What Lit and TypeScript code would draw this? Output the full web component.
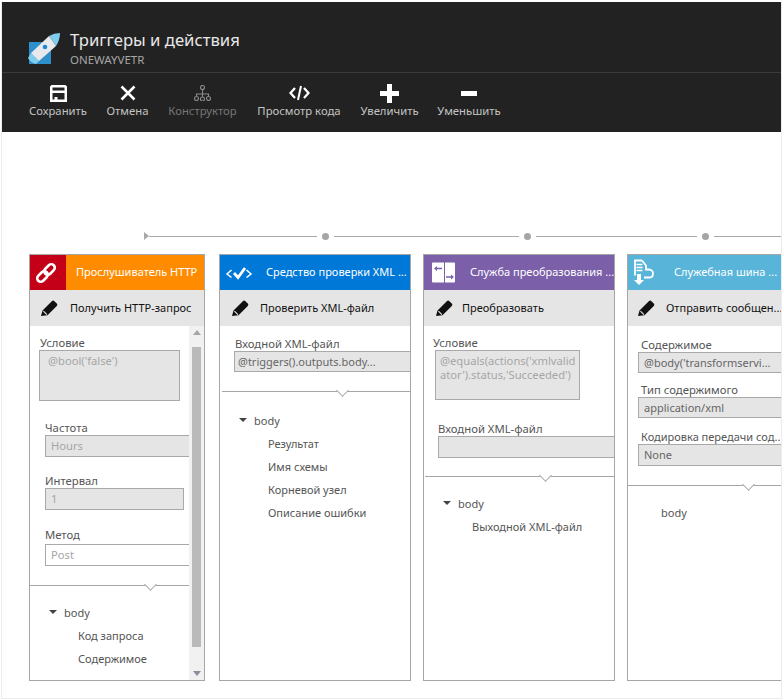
import { LitElement, html, css, svg } from 'lit';
import { customElement } from 'lit/decorators.js';

interface Field { mt: number; x: number; label: string; labelX: number; value: string; h: number; w: number; pad: number; gap?: number; light?: boolean; faded?: boolean; small?: boolean; }
interface Card {
    title: string; action: string; color: string; iconBg?: string; icon: unknown; width: number; actionX: number; actionGap: number;
    fields: Field[]; dividerMt: number; dividerX: number; notch: number; treeMt: number; treeX: number;
    arrow: boolean; children: string[]; scroll?: boolean;
}

const saveIcon = svg`<path fill="#fff" fill-rule="evenodd" d="M1.500 0h14l1.500 1.500V17H0V1.500zM2.500 2.500v3h12v-3zM2.500 8v6.500h2v-2.500h3v2.500h7V8z"/>`;
const cancelIcon = svg`<path stroke="#fff" stroke-width="2.600" d="M1.500 1.500l13 13M14.500 1.500l-13 13"/>`;
const treeIcon = svg`<g fill="none" stroke="#8a8a8a" stroke-width="1.100"><circle cx="8.500" cy="2.500" r="2"/><circle cx="2.500" cy="13.500" r="2"/><circle cx="8.500" cy="14" r="2"/><circle cx="14.500" cy="13.500" r="2"/><path d="M8.500 4.500V12M2.500 11.500V9h12v2.500"/></g>`;
const codeIcon = svg`<path fill="none" stroke="#fff" stroke-width="2.300" d="M6 3L1.500 8 6 13M15 3l4.500 5L15 13"/><path stroke="#fff" stroke-width="2" d="M12 1L9 15"/>`;
const plusIcon = svg`<path fill="#fff" d="M7 0h5v7h7v5h-7v7H7v-7H0V7h7z"/>`;
const minusIcon = svg`<path fill="#fff" d="M0 0h16v5H0z"/>`;
const pencilIcon = svg`<path fill="#111" d="M0 16l1.500-5.500L10.800 1.200q1.300-1.200 2.600 0l2.400 2.300q1.200 1.300 0 2.600L6.500 15.200zM2 11.500l3.500 3.500.8-.8-3.500-3.500z"/>`;
const linkIcon = svg`<g fill="none" stroke="#fff" stroke-width="2.600" transform="rotate(-45 11 11)"><rect x="0" y="7.500" width="12" height="7" rx="3.500"/><rect x="10" y="7.500" width="12" height="7" rx="3.500"/></g>`;
const checkIcon = svg`<g fill="none" stroke="#fff" stroke-width="1.500"><path d="M6.500 8L2 12l4.500 3.500M21.500 8L26 12l-4.500 3.500"/><path stroke-width="2.800" d="M9 11l4 4.500L20 6"/></g>`;
const transformIcon = svg`<path fill="#fff" d="M4 .500h11v20H4q-1 0-1-1V1.500q0-1 1-1zM16 .500h9q1 0 1 1v18q0 1-1 1h-9z"/><path stroke="#7b5fa9" stroke-width="1.600" d="M8 6.500h5M17 15h5" fill="none"/><path fill="#7b5fa9" d="M8 4v5l-3-2.500zM22 12.500v5l3-2.500z"/>`;
const busIcon = svg`<path fill="none" stroke="#fff" stroke-width="1.800" d="M9-1.500H2v15M9-1.500l4 5v4h3c2.500 0 4 2 4 4 0 2.500-1.500 4-3.500 4H11"/><path stroke="#fff" stroke-width="1.300" d="M3.500 2.500h6M3.500 5.500h6M3.500 8.500h6"/><path fill="#fff" d="M4 12h4v6h3l-5 5-5-5h3z"/>`;

const cards: Card[] = [
    {
        title: 'Прослушиватель HTTP', action: 'Получить HTTP-запрос', color: '#ff8c00', iconBg: '#c30017', icon: linkIcon, width: 176, actionX: 11, actionGap: 12,
        fields: [
            { mt: 10, x: 9, labelX: 10, label: 'Условие', value: "@bool('false')", h: 51, w: 141, pad: 8, faded: true },
            { mt: 20, x: 15, labelX: 15, label: 'Частота', value: 'Hours', h: 22, w: 170, pad: 5, faded: true },
            { mt: 17, x: 15, labelX: 15, label: 'Интервал', value: '1', h: 22, w: 139, pad: 5, faded: true },
            { mt: 18, gap: 2, x: 15, labelX: 15, label: 'Метод', value: 'Post', h: 22, w: 170, pad: 5, light: true, faded: true },
        ],
        dividerMt: 19, dividerX: 0, notch: 120, treeMt: 18, treeX: 19, arrow: true, children: ['Код запроса', 'Содержимое'], scroll: true,
    },
    {
        title: 'Средство проверки XML ...', action: 'Проверить XML-файл', color: '#0078d7', icon: checkIcon, width: 192, actionX: 12, actionGap: 11,
        fields: [{ mt: 11, x: 14, labelX: 15, label: 'Входной XML-файл', value: '@triggers().outputs.body...', h: 21, w: 190, pad: 3 }],
        dividerMt: 19, dividerX: 2, notch: 122, treeMt: 20, treeX: 19, arrow: true,
        children: ['Результат', 'Имя схемы', 'Корневой узел', 'Описание ошибки'],
    },
    {
        title: 'Служба преобразования ...', action: 'Преобразовать', color: '#7b5fa9', icon: transformIcon, width: 192, actionX: 12, actionGap: 9,
        fields: [
            { mt: 10, x: 11, labelX: 9, label: 'Условие', value: "@equals(actions('xmlvalidator').status,'Succeeded')", h: 50, w: 145, pad: 4, faded: true },
            { mt: 22, x: 14, labelX: 14, label: 'Входной XML-файл', value: '', h: 22, w: 190, pad: 5 },
        ],
        dividerMt: 18, dividerX: 1, notch: 121, treeMt: 18, treeX: 19, arrow: true, children: ['Выходной XML-файл'],
    },
    {
        title: 'Служебная шина ...', action: 'Отправить сообщен...', color: '#59b4d9', icon: busIcon, width: 192, actionX: 10, actionGap: 11,
        fields: [
            { mt: 12, x: 10, labelX: 13, label: 'Содержимое', value: "@body('transformservi...", h: 21, w: 190, pad: 5 },
            { mt: 10, x: 10, labelX: 13, label: 'Тип содержимого', value: 'application/xml', h: 21, w: 190, pad: 5 },
            { mt: 12, x: 10, labelX: 13, label: 'Кодировка передачи сод...', value: 'None', h: 22, w: 190, pad: 5, small: true },
        ],
        dividerMt: 19, dividerX: 0, notch: 120, treeMt: 18, treeX: 33, arrow: false, children: [],
    },
];

const tools = [
    { label: 'Сохранить', icon: saveIcon, w: 17, h: 17, width: 58 },
    { label: 'Отмена', icon: cancelIcon, w: 16, h: 16, width: 41 },
    { label: 'Конструктор', icon: treeIcon, w: 17, h: 16, width: 69, off: true },
    { label: 'Просмотр кода', icon: codeIcon, w: 21, h: 16, width: 84 },
    { label: 'Увеличить', icon: plusIcon, w: 19, h: 19, width: 57 },
    { label: 'Уменьшить', icon: minusIcon, w: 16, h: 5, width: 62 },
];

@customElement('app-root')
export class AppRoot extends LitElement {
    static styles = css`
        :host {
            display: block;
            width: 783px;
            height: 700px;
            background: #fff;
            font-family: "Noto Sans", "Open Sans", sans-serif;
            font-size: 11px;
            color: #555;
        }
        .frame {
            box-sizing: border-box;
            margin: 1px;
            width: 781px;
            height: 698px;
            border: 1px solid #ececec;
            border-top: 0;
            overflow: hidden;
        }
        .blade {
            background: #222;
            height: 130px;
            box-sizing: border-box;
            margin-top: 1px;
        }
        .titlebar {
            height: 71px;
            box-sizing: border-box;
            border-bottom: 1px solid #3b3b3b;
            padding: 28px 0 0 25px;
            display: flex;
            gap: 10px;
        }
        .logo { margin-top: 2px; flex: none; }
        .title { color: #e8e8e8; font-size: 16.700px; line-height: 19px; }
        .subtitle { color: #a6a6a6; font-size: 11.500px; line-height: 17px; margin-top: 2px; }
        .toolbar {
            display: flex;
            gap: 20px;
            padding: 10px 0 0 27px;
        }
        .tool {
            display: flex;
            flex-direction: column;
            align-items: center;
            color: #c4c4c4;
            font-size: 11.300px;
        }
        .tool.off { color: #767676; }
        .tool-icon { height: 20px; display: flex; align-items: center; justify-content: center; }
        .tool-label { line-height: 15px; white-space: nowrap; }

        .flow {
            display: flex;
            align-items: center;
            height: 10px;
            margin-top: 99px;
            padding-left: 142px;
        }
        .flow i { display: block; flex: none; }
        .start { width: 0; height: 0; border-left: 5px solid #a8a8a8; border-top: 4px solid transparent; border-bottom: 4px solid transparent; }
        .line { height: 1px; background: #aaa; }
        .dot { width: 7px; height: 7px; border-radius: 50%; background: #a6a6a6; margin: 0 5px; }
        .line.a { width: 168px; }
        .line.b { width: 185px; }
        .line.c { width: 161px; }
        .line.d { width: 80px; }

        .cards {
            display: flex;
            gap: 12px;
            margin-top: 13px;
            padding-left: 27px;
        }
        .card {
            box-sizing: border-box;
            height: 427px;
            flex: none;
            border: 1px solid #a6a6a6;
            display: flex;
            flex-direction: column;
            overflow: hidden;
            white-space: nowrap;
        }
        .card:first-child { margin-right: 2px; }
        .head {
            height: 35px;
            flex: none;
            display: flex;
            align-items: center;
            color: #fff;
        }
        .head > span { margin-top: -2px; }
        .head-icon {
            width: 36px;
            height: 35px;
            flex: none;
            display: flex;
            align-items: center;
            justify-content: center;
            margin-right: 10px;
        }
        .head-icon svg { overflow: visible; }
        .action {
            height: 36px;
            flex: none;
            background: #e5e5e5;
            display: flex;
            align-items: center;
            color: #111;
        }
        .action > span { margin-top: -2px; }
        .body { flex: 1; display: flex; min-height: 0; }
        .main { flex: 1; min-width: 0; overflow: hidden; }
        .label { line-height: 14px; color: #555; font-size: 11.300px; }
        .label.small { font-size: 11px; }
        .box {
            box-sizing: border-box;
            border: 1px solid #a9a9a9;
            background: #e5e5e5;
            padding-top: 3px;
            line-height: 13.500px;
            color: #666;
            white-space: normal;
            word-break: break-all;
        }
        .box.faded { color: #a6a6a6; font-size: 11.200px; }
        .box.light { background: #fff; }
        .divider { position: relative; height: 1px; background: #a6a6a6; }
        .divider::after {
            content: '';
            position: absolute;
            left: var(--notch);
            top: -5px;
            width: 8px;
            height: 8px;
            background: #fff;
            border-right: 1px solid #a6a6a6;
            border-bottom: 1px solid #a6a6a6;
            transform: rotate(45deg);
        }
        .row { display: flex; align-items: center; height: 16px; color: #555; }
        .tri {
            width: 0; height: 0; margin-right: 7px;
            border-top: 4px solid #444;
            border-left: 4px solid transparent;
            border-right: 4px solid transparent;
        }
        .child { margin-top: 7px; padding-left: 29px; }
        .scroll {
            flex: none;
            width: 15px;
            background: #f1f1f1;
            box-sizing: border-box;
            padding: 4px 0;
            display: flex;
            flex-direction: column;
            align-items: center;
        }
        .up, .down { width: 0; height: 0; border-left: 4px solid transparent; border-right: 4px solid transparent; }
        .up { border-bottom: 5px solid #a6a6a6; }
        .down { border-top: 5px solid #8f8a9e; }
        .thumb { width: 9px; height: 300px; background: #bababa; margin: 12px 0 24px; }
    `;

    private _icon(w: number, h: number, content: unknown) {
        return html`<svg width=${w} height=${h} viewBox="0 0 ${w} ${h}">${content}</svg>`;
    }

    private _renderField(f: Field) {
        return html`<div style="margin-top:${f.mt}px">
            <div class="label ${f.small ? 'small' : ''}" style="padding-left:${f.labelX}px;margin-bottom:${f.gap ?? 0}px">${f.label}</div>
            <div class="box ${f.faded ? 'faded' : ''} ${f.light ? 'light' : ''}"
                style="margin-left:${f.x}px;width:${f.w}px;height:${f.h}px;padding-left:${f.pad}px">${f.value}</div>
        </div>`;
    }

    private _renderCard(c: Card) {
        return html`<section class="card" style="width:${c.width}px">
            <div class="head" style="background:${c.color}">
                <div class="head-icon" style=${c.iconBg ? `background:${c.iconBg}` : ''}>
                    ${this._icon(26, 22, c.icon)}
                </div>
                <span>${c.title}</span>
            </div>
            <div class="action" style="padding-left:${c.actionX}px;gap:${c.actionGap}px">
                ${this._icon(17, 16, pencilIcon)}<span>${c.action}</span>
            </div>
            <div class="body">
                <div class="main">
                    ${c.fields.map(f => this._renderField(f))}
                    <div class="divider" style="margin-top:${c.dividerMt}px;margin-left:${c.dividerX}px;--notch:${c.notch - c.dividerX - 4}px"></div>
                    <div class="row" style="margin-top:${c.treeMt}px;padding-left:${c.treeX}px">
                        ${c.arrow ? html`<span class="tri"></span>` : ''}<span>body</span>
                    </div>
                    ${c.children.map(t => html`<div class="row child" style="margin-left:${c.treeX}px">${t}</div>`)}
                </div>
                ${c.scroll ? html`<div class="scroll"><span class="up"></span><span class="thumb"></span><span class="down"></span></div>` : ''}
            </div>
        </section>`;
    }

    render() {
        return html`<div class="frame">
            <header class="blade">
                <div class="titlebar">
                    <svg class="logo" width="33" height="33" viewBox="0 0 33 33">
                        <path fill="#2e8fcb" d="M2 10h22v22H2z"/>
                        <path fill="#7fcdec" d="M22 4q5-3 11-3 0 7-4 13zM4 21l8 8-3 3q-5-1-8-6z"/>
                        <path fill="#e8e9ec" d="M4 21L22 4l7 10-17 15z"/>
                        <circle cx="18" cy="15" r="2.300" fill="#1f86d6"/>
                    </svg>
                    <div>
                        <div class="title">Триггеры и действия</div>
                        <div class="subtitle">ONEWAYVETR</div>
                    </div>
                </div>
                <div class="toolbar">
                    ${tools.map(t => html`<div class="tool ${t.off ? 'off' : ''}" style="width:${t.width}px">
                        <div class="tool-icon">${this._icon(t.w, t.h, t.icon)}</div>
                        <div class="tool-label">${t.label}</div>
                    </div>`)}
                </div>
            </header>
            <div class="flow">
                <i class="start"></i><i class="line a"></i><i class="dot"></i>
                <i class="line b"></i><i class="dot"></i>
                <i class="line c"></i><i class="dot"></i><i class="line d"></i>
            </div>
            <div class="cards">${cards.map(c => this._renderCard(c))}</div>
        </div>`;
    }
}
